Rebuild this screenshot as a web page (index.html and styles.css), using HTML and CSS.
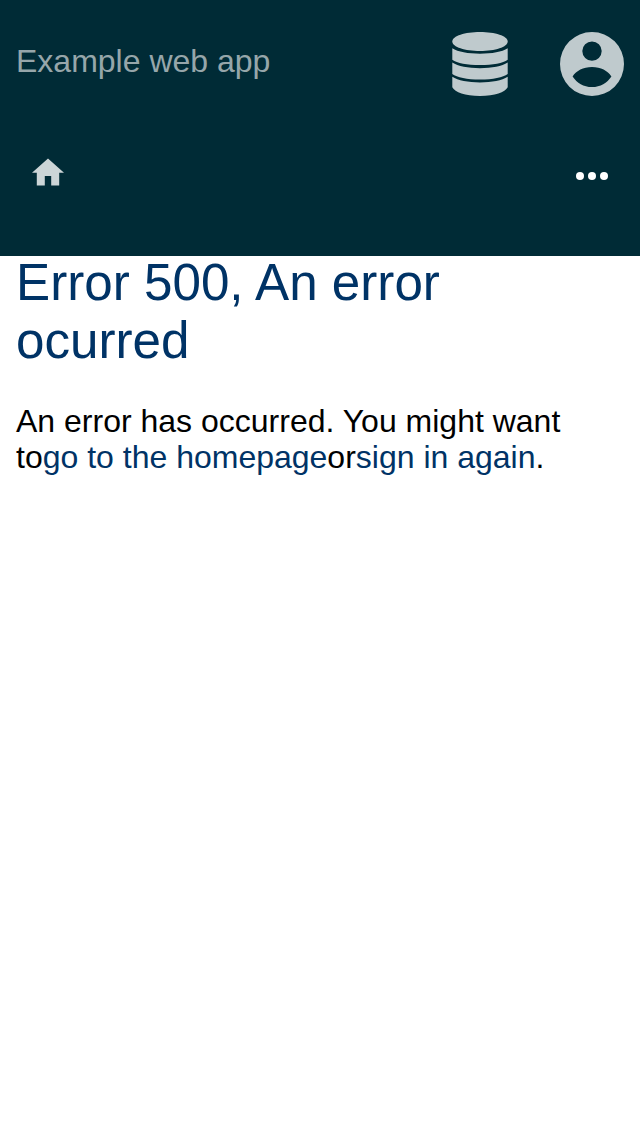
FILE: index.html
```html
<!DOCTYPE html>
<html lang="en">
<head>
<meta charset="utf-8">
<title>Example web app</title>
<link rel="stylesheet" href="styles.css">
</head>
<body>
<header class="header">
  <div class="topbar">
    <span class="brand">Example web app</span>
    <div class="actions">
      <svg class="icon-db" viewBox="0 0 56 64"><path d="M28 0C43 0 55.7 4 55.7 9.5S43 19 28 19 .3 15 .3 9.5 13 0 28 0z"/><path d="M.3 16.3C6 20 16 21.7 28 21.7S50 20 55.7 16.3V27.7C51 31 41 33.1 28 33.1S5 31 .3 27.7z"/><path d="M.3 30.6C6 34.3 16 36.2 28 36.2S50 34.3 55.7 30.6V42C51 45.5 41 47.5 28 47.5S5 45.5 .3 42z"/><path d="M.3 44.7C6 48.4 16 50.4 28 50.4S50 48.4 55.7 44.7V55.3C53 60.5 43 64 28 64S3 60.5 .3 55.3z"/></svg>
      <svg class="icon-user" viewBox="0 0 64 64"><path fill-rule="evenodd" d="M32 0a32 32 0 1 0 0 64a32 32 0 0 0 0-64zM32 9.4a9.7 9.7 0 1 1 0 19.4a9.7 9.7 0 0 1 0-19.4zM12.6 44.4C16.5 38.7 23 35 32 35S47.500 38.700 51.400 44.400C47 51 40.500 55 32 55S17 51 12.600 44.400z"/></svg>
    </div>
  </div>
  <nav class="navbar">
    <svg class="icon-home" viewBox="2 3 20 17"><path d="M10 20v-6h4v6h5v-8h3L12 3 2 12h3v8z"/></svg>
    <svg class="icon-more" viewBox="0 0 32 8"><circle cx="4" cy="4" r="4"/><circle cx="16" cy="4" r="4"/><circle cx="28" cy="4" r="4"/></svg>
  </nav>
</header>
<main class="content">
  <h1 class="title">Error 500, An error ocurred</h1>
  <p class="message">An error has occurred. You might want to<a class="link">go to the homepage</a>or<a class="link">sign in again</a>.</p>
</main>
</body>
</html>
```
FILE: styles.css
```css
body {
  margin: 0;
  background: #fff;
  color: #000;
  font: 32px/36px "Liberation Sans", Arial, sans-serif;
}
.header {
  box-sizing: border-box;
  height: 256px;
  background: #002b36;
}
.topbar {
  box-sizing: border-box;
  height: 128px;
  padding: 0 16px;
  display: flex;
  align-items: center;
  justify-content: space-between;
}
.brand { color: #96a6aa; padding-bottom: 6px; }
.actions { display: flex; align-items: center; gap: 52px; fill: #bfcacd; }
.icon-db { width: 56px; height: 64px; }
.icon-user { width: 64px; height: 64px; }
.navbar {
  display: flex;
  justify-content: space-between;
  padding: 30px 32px 0;
}
.icon-home { width: 32px; height: 28px; fill: #ccd5d7; }
.icon-more { width: 32px; height: 8px; margin-top: 14px; fill: #fff; }
.content { display: flow-root; padding: 0 16px; }
.title {
  margin: -2px 0 0;
  color: #036;
  font-size: 51.2px;
  line-height: 58px;
  font-weight: 400;
}
.message { margin: 33px 0 0; }
.link { color: #036; }
```
